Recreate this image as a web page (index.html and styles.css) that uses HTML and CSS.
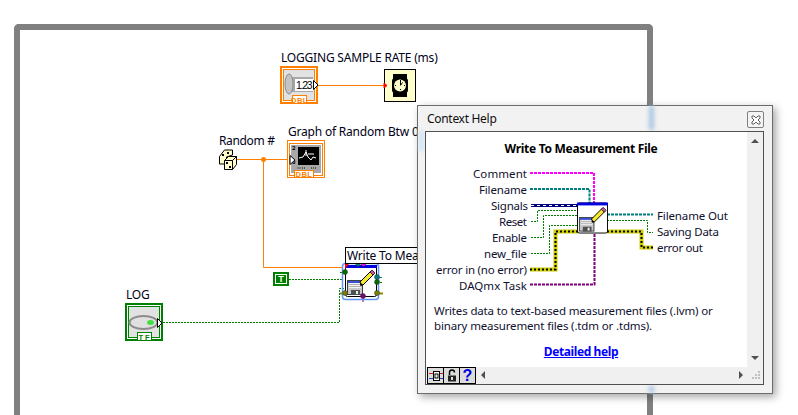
FILE: index.html
```html
<!DOCTYPE html>
<html lang="en">
<head>
    <meta charset="UTF-8">
    <title>Block Diagram</title>
    <link rel="stylesheet" href="styles.css">
</head>
<body>
    <!-- VI icon used on the diagram and in the help window -->
    <svg class="defs" width="0" height="0">
        <symbol id="vi-icon" viewBox="0 0 32 32">
            <rect x="0.5" y="0.5" width="31" height="31" rx="2" fill="#fff" stroke="#000"/>
            <rect x="0" y="0" width="32" height="3" fill="#0000e0"/>
            <rect x="2.5" y="15.5" width="15" height="14" fill="#c8c8c8" stroke="#404040"/>
            <rect x="3" y="16" width="14" height="2" fill="#3a50d8"/>
            <rect x="4" y="18" width="12" height="5" fill="#f4f4f4"/>
            <path d="M4 19.5h12M4 21.5h12" stroke="#b0b0b0"/>
            <rect x="6" y="25" width="9" height="5" fill="#505050"/>
            <rect x="11" y="26" width="2" height="3" fill="#eee"/>
            <path d="M16 20l-1-3 11-11 3 3-11 11z" fill="#f4e830" stroke="#000"/>
            <path d="M25 7l2-2 3 3-2 2z" fill="#d050a0" stroke="#000" stroke-width=".7"/>
            <path d="M15 21l1-3 2 2z" fill="#000"/>
        </symbol>
    </svg>

    <div class="diagram">
        <span class="label label-rate">LOGGING SAMPLE RATE (ms)</span>
        <span class="label label-random">Random #</span>
        <span class="label label-graph">Graph of Random Btw 0-1</span>
        <span class="label label-log">LOG</span>
        <span class="label label-write">Write To Measurement File</span>

        <svg class="nodes" width="798" height="415" viewBox="0 0 798 415">
            <!-- wires -->
            <path class="wire-dbl" d="M317 85.5H385M237 159.5H288M263.5 159V267.5H342"/>
            <circle cx="263.5" cy="159.5" r="2.5" fill="#ff8000"/>
            <path class="wire-bool" d="M289 279.5H342M163 322.5H339.5V288.5H344M340 272.5H344"/>

            <!-- LOGGING SAMPLE RATE control -->
            <rect x="281" y="67" width="36" height="36" fill="#fff" stroke="#ff8000" stroke-width="2"/>
            <rect x="283.5" y="69.5" width="31" height="31" fill="#e2e2e2" stroke="#ff8000"/>
            <rect x="292" y="77" width="21" height="15" fill="#a8a8a8"/>
            <ellipse cx="289" cy="84" rx="4" ry="10" fill="#c4c4c4" stroke="#8c8c8c"/>
            <rect x="295" y="79" width="18" height="12" fill="#fff"/>
            <text class="num-text" x="296" y="89" textLength="16.5">1.23</text>
            <path d="M313.5 80.5l4.500 4.500-4.500 4.500z" fill="#fff" stroke="#000"/>
            <rect x="292.500" y="95.500" width="14" height="8" fill="#fff" stroke="#ff8000"/>
            <text class="tag-text tag-orange" x="299.500" y="102.500">DBL</text>

            <!-- Wait node -->
            <rect x="384.500" y="69.500" width="31" height="32" fill="#ffffcc" stroke="#000"/>
            <rect x="393" y="74" width="14" height="23" fill="#000"/>
            <rect x="392" y="78" width="16" height="15" rx="3" fill="#000"/>
            <circle cx="400" cy="85.500" r="6" fill="#ffffcc"/>
            <path d="M400.500 80v5M400.500 85.500l2-3M395 85.500h1M404 85.500h1M400.500 89v1" stroke="#000" fill="none"/>
            <path d="M384 83l3 2.500-3 2.500z" fill="#ff0000" stroke="#ff0000"/>

            <!-- Random number dice -->
            <path d="M219.500 156.500l5-6.500h8v5l-6 2v7h-7z" fill="#ffffcc" stroke="#000"/>
            <path d="M224.500 160.500l4-4h8v8l-4 5h-8z" fill="#ffffcc" stroke="#000"/>
            <path d="M224.500 160.500h8v9M232.500 160.500l4-4" fill="none" stroke="#000"/>
            <rect x="226" y="162" width="2" height="2"/>
            <rect x="229" y="166" width="2" height="2"/>
            <rect x="222" y="154" width="2" height="2"/>
            <rect x="227" y="152" width="2" height="2"/>

            <!-- Graph indicator -->
            <rect x="287.500" y="140.500" width="37" height="37" fill="#fff" stroke="#ff8000"/>
            <rect x="289.500" y="143.500" width="33" height="32" fill="#fff" stroke="#ff8000"/>
            <rect x="291" y="145" width="30" height="28" fill="#a8a8a8"/>
            <rect x="298" y="147" width="21" height="18" fill="#000"/>
            <path d="M299 158l4-1 3-5 2 5 3 3 2-3 3 1M306 150v6M308 154h6" fill="none" stroke="#fff"/>
            <text class="tiny-text" x="292" y="150">2</text>
            <text class="tiny-text" x="292" y="164">0</text>
            <path d="M297.500 168h4M302 168h3M311 168h6" fill="none" stroke="#000" stroke-dasharray="1 1"/>
            <path d="M290 155.500l5 4.500-5 4.500z" fill="#fff" stroke="#000"/>
            <rect x="294.500" y="170.500" width="19" height="7" fill="#fff" stroke="#ff8000"/>
            <text class="tag-text tag-orange" x="304" y="177">DBL</text>

            <!-- LOG control -->
            <rect x="126" y="304" width="36" height="36" fill="#fff" stroke="#008000" stroke-width="2"/>
            <rect x="128.500" y="306.500" width="31" height="31" fill="#e2e2e2" stroke="#008000"/>
            <ellipse cx="143.500" cy="322.500" rx="14" ry="6.500" fill="#e0e0e0" stroke="#8c8c8c" stroke-width="2"/>
            <ellipse cx="150.500" cy="322.500" rx="3.500" ry="2.500" fill="#40e040"/>
            <path d="M157.500 318.500l4.500 4.500-4.500 4.500z" fill="#fff" stroke="#000"/>
            <rect x="137.500" y="332.500" width="14" height="8" fill="#fff" stroke="#008000"/>
            <text class="tag-text tag-green tag-wide" x="145" y="339.500">TF</text>

            <!-- True constant -->
            <rect x="273" y="272" width="16" height="14" fill="#008000"/>
            <rect x="275.500" y="274.500" width="11" height="9" fill="none" stroke="#fff"/>
            <text class="const-text" x="281" y="282">T</text>

            <!-- Write To Measurement File express VI -->
            <path class="stub-pink" d="M363.500 259V264"/>
            <path class="stub-err" d="M340 293.500H345M377 293.500H383"/>
            <path class="stub-teal" d="M377 277.500H382"/>
            <path class="stub-purple" d="M363 296V302"/>
            <path class="wire-bool" d="M377 282.500H382"/>
            <rect x="342.500" y="263.500" width="36" height="36" rx="3" fill="none" stroke="#5f96f5" stroke-width="1.500"/>
            <use href="#vi-icon" x="345" y="265" width="32" height="32"/>
            <path d="M345 264h4l-4 5z" fill="#ff0000"/>
            <circle class="term term-teal" cx="358" cy="264" r="2.200"/>
            <circle class="term term-pink" cx="363.500" cy="264" r="2.200"/>
            <circle class="term term-green" cx="345" cy="272" r="2.500"/>
            <circle class="term term-olive" cx="345" cy="293" r="2.500"/>
            <circle class="term term-teal" cx="377" cy="277" r="2.500"/>
            <circle class="term term-green" cx="377" cy="282" r="2.500"/>
            <circle class="term term-olive" cx="377" cy="293" r="2.500"/>
            <circle class="term term-purple" cx="363" cy="296" r="2.500"/>
        </svg>
    </div>

    <!-- Context Help window -->
    <div class="help-window">
        <div class="glass glass-top"></div>
        <div class="glass glass-bottom"></div>
        <div class="glass glass-left"></div>
        <div class="help-title">
            <span>Context Help</span>
            <button class="close-btn" type="button">
                <svg width="10" height="10" viewBox="0 0 10 10"><path d="M1 1h2l2 2 2-2h2v2l-2 2 2 2v2h-2l-2-2-2 2h-2v-2l2-2-2-2z" fill="#fff" stroke="#606060"/></svg>
            </button>
        </div>
        <div class="help-pane">
            <div class="help-main">
                <div class="help-text">
                    <h1 class="help-heading">Write To Measurement File</h1>
                    <svg class="pins" width="321" height="135" viewBox="426 160 321 135">
                        <text class="pin pin-in" x="527" y="178" textLength="54">Comment</text>
                        <text class="pin pin-in" x="527" y="194" textLength="48">Filename</text>
                        <text class="pin pin-in" x="528" y="210" textLength="37">Signals</text>
                        <text class="pin pin-in" x="527" y="226" textLength="28">Reset</text>
                        <text class="pin pin-in" x="527" y="242" textLength="35">Enable</text>
                        <text class="pin pin-in" x="527" y="258" textLength="43">new_file</text>
                        <text class="pin pin-in" x="527" y="274" textLength="91">error in (no error)</text>
                        <text class="pin pin-in" x="527" y="290" textLength="68">DAQmx Task</text>
                        <text class="pin" x="657" y="220" textLength="71">Filename Out</text>
                        <text class="pin" x="657" y="236" textLength="62">Saving Data</text>
                        <text class="pin" x="657" y="252" textLength="46">error out</text>

                        <path class="help-pink" d="M530 173H594V204"/>
                        <path class="help-teal" d="M530 189H589.500V204"/>
                        <path class="help-purple" d="M530 284.500H594.500V232"/>
                        <path class="help-signal-a" d="M531 205.500H578"/>
                        <path class="help-signal-b" d="M531 205.500H578"/>
                        <path class="wire-bool" d="M531 221.500H537.500V210.500H578M531 237.500H543.500V215.500H578M531 253.500H549.500V225.500H578"/>
                        <path class="help-err-a" d="M530 269.500H555.500V231.500H578"/>
                        <path class="help-err-b" d="M530 269.500H555.500V231.500H578"/>
                        <path class="help-teal" d="M607 214.500H653"/>
                        <path class="wire-bool" d="M607 220.500H647.500V232.500H653"/>
                        <path class="help-err-a" d="M607 231.500H641.500V247.500H653"/>
                        <path class="help-err-b" d="M607 231.500H641.500V247.500H653"/>
                        <use href="#vi-icon" x="577" y="202" width="31" height="32"/>
                    </svg>
                    <p class="help-desc">Writes data to text-based measurement files (.lvm) or<br>binary measurement files (.tdm or .tdms).</p>
                    <a class="help-link" href="#">Detailed help</a>
                </div>
                <div class="vscroll">
                    <span class="arrow arrow-up"></span>
                    <span class="arrow arrow-down"></span>
                </div>
            </div>
            <div class="help-bottom">
                <div class="tool-btns">
                    <button class="tool-btn" type="button">
                        <svg width="14" height="14" viewBox="0 0 14 14">
                            <path d="M0 4.500H5M9 4.500H14" fill="none" stroke="#d02020"/>
                            <path d="M0 9.500H5M9 9.500H14" fill="none" stroke="#2040d0"/>
                            <rect x="4.500" y="2.500" width="6" height="9" fill="#fff" stroke="#000"/>
                            <rect x="6" y="5" width="3" height="4" fill="none" stroke="#000"/>
                        </svg>
                    </button>
                    <button class="tool-btn" type="button">
                        <svg width="14" height="14" viewBox="0 0 14 14">
                            <path d="M4.500 6V3.500a2.500 2.500 0 0 1 5 0" fill="none" stroke="#000" stroke-width="1.500"/>
                            <rect x="3" y="6.500" width="8" height="6" fill="#222"/>
                            <rect x="6" y="8" width="2" height="3" fill="#ddd"/>
                        </svg>
                    </button>
                    <button class="tool-btn tool-help" type="button">?</button>
                </div>
                <div class="hscroll">
                    <span class="arrow arrow-left"></span>
                    <span class="arrow arrow-right"></span>
                </div>
                <div class="grip">
                    <svg width="16" height="16" viewBox="0 0 16 16">
                        <path d="M11 4h2v2h-2zM8 7h2v2h-2zM11 7h2v2h-2zM5 10h2v2h-2zM8 10h2v2h-2zM11 10h2v2h-2z" fill="#c0c0c0"/>
                    </svg>
                </div>
            </div>
        </div>
    </div>
</body>
</html>
```

FILE: styles.css
```css
/* page */
body {
    margin: 0;
    background-color: #fff;
    font-family: "Noto Sans", sans-serif;
    font-size: 12px;
    color: #000;
    width: 798px;
    height: 415px;
    overflow: hidden;
    position: relative;
}

.defs {
    position: absolute;
}

/* block diagram frame */
.diagram {
    margin: 0 0 0 14px;
    position: relative;
    left: 0;
    top: 24px;
    width: 627px;
    height: 385px;
    border: 6px solid #808080;
    border-bottom: none;
    border-top-left-radius: 5px;
    border-top-right-radius: 5px;
}

.nodes {
    position: absolute;
    left: -20px;
    top: -30px;
}

/* free labels on the diagram */
.label {
    position: absolute;
    line-height: 16px;
    white-space: nowrap;
    letter-spacing: -0.2px;
    color: #000018;
    z-index: 1;
}

.label-rate { left: 261px; top: 20px; }
.label-random { left: 199px; top: 103px; letter-spacing: -0.35px; }
.label-graph { left: 268px; top: 94px; }
.label-log { left: 106px; top: 257px; }

.label-write {
    left: 325px;
    top: 217px;
    width: 110px;
    height: 15px;
    padding-left: 1px;
    background-color: #fff;
    border: 1px solid #000;
    border-right: none;
}

/* wires */
.wire-dbl { stroke: #ff8000; fill: none; }
.wire-bool { stroke: #008000; stroke-dasharray: 2 1; fill: none; }
.stub-pink { stroke: #ff00ff; stroke-width: 2; fill: none; }
.stub-err { stroke: #8c8c00; stroke-width: 2; fill: none; }
.stub-teal { stroke: #007f7f; fill: none; }
.stub-purple { stroke: #800080; fill: none; }

.help-pink { stroke: #ff00ff; stroke-width: 2; stroke-dasharray: 3 1; fill: none; }
.help-teal { stroke: #007f7f; stroke-width: 2; stroke-dasharray: 3 1; fill: none; }
.help-purple { stroke: #800080; stroke-width: 2; stroke-dasharray: 3 1; fill: none; }
.help-signal-a { stroke: #000080; stroke-width: 3; fill: none; }
.help-signal-b { stroke: #fff; stroke-dasharray: 3 3; fill: none; }
.help-err-a { stroke: #d0d000; stroke-width: 4; fill: none; }
.help-err-b { stroke: #000; stroke-width: 2; stroke-dasharray: 2 2; fill: none; }

/* terminals on the express VI */
.term { stroke: #303030; stroke-width: 0.5; }
.term-teal { fill: #007f7f; }
.term-pink { fill: #ff00ff; }
.term-green { fill: #007000; }
.term-olive { fill: #808000; }
.term-purple { fill: #800080; }

/* small texts inside the nodes */
.num-text { font-family: "Liberation Sans", sans-serif; font-size: 10.5px; fill: #000; }
.tag-text { font-family: "Liberation Sans", sans-serif; font-size: 7.5px; font-weight: 700; text-anchor: middle; letter-spacing: 0.5px; }
.tag-wide { letter-spacing: 2px; }
.tag-orange { fill: #ff8000; }
.tag-green { fill: #008000; }
.tiny-text { font-size: 6px; font-weight: 700; fill: #000; }
.const-text { font-family: "Liberation Sans", sans-serif; font-size: 9px; font-weight: 700; fill: #fff; text-anchor: middle; }

/* context help window */
.help-window {
    position: absolute;
    left: 417px;
    top: 105px;
    padding: 0 8px 8px 7px;
    width: 339px;
    height: 279px;
    background-color: #f2f2f2;
    border: 1px solid #6c6c6c;
    box-shadow: 3px 3px 8px rgba(0, 0, 0, 0.35);
    z-index: 2;
    display: flex;
    flex-direction: column;
}

/* frame seen blurred through the aero glass border */
.glass {
    position: absolute;
    background-color: #a8c4e0;
    filter: blur(2px);
}

.glass-top { left: 231px; top: 0; width: 5px; height: 24px; }
.glass-bottom { left: 231px; bottom: 0; width: 5px; height: 7px; }
.glass-left { left: 1px; top: 25px; width: 5px; height: 20px; background-color: #cfe2f4; }

.help-title {
    height: 25px;
    flex: none;
    display: flex;
    justify-content: space-between;
    align-items: center;
    position: relative;
    padding-left: 2px;
    letter-spacing: -0.3px;
    color: #101010;
}

.close-btn {
    width: 17px;
    height: 17px;
    margin-top: 2px;
    padding: 0;
    border: 1px solid #808080;
    border-radius: 2px;
    background-color: #f4f4f4;
    display: flex;
    align-items: center;
    justify-content: center;
}

.help-pane {
    flex: 1;
    position: relative;
    border: 1px solid #505050;
    background-color: #fff;
    display: flex;
    flex-direction: column;
    min-height: 0;
}

.help-main {
    flex: 1;
    display: flex;
    min-height: 0;
}

.help-text {
    width: 321px;
    flex: none;
}

.help-heading {
    margin: 9px 11px 4px 0;
    height: 15px;
    line-height: 15px;
    font-size: 12px;
    font-weight: 700;
    letter-spacing: -0.3px;
    text-align: center;
    color: #000;
}

.pins {
    display: block;
}

.pin {
    font-size: 11.5px;
    fill: #101030;
}

.pin-in {
    text-anchor: end;
}

.help-desc {
    margin: 8px 0 0 8px;
    font-size: 11.5px;
    line-height: 15px;
    letter-spacing: -0.15px;
    color: #101030;
}

.help-link {
    display: block;
    margin: 10px 11px 0 0;
    text-align: center;
    font-weight: 700;
    letter-spacing: -0.4px;
    color: #0000ff;
}

/* scrollbars */
.vscroll {
    flex: 1;
    background-color: #f0f0f0;
    position: relative;
}

.help-bottom {
    height: 17px;
    flex: none;
    display: flex;
    background-color: #f0f0f0;
}

.tool-btns {
    display: flex;
    margin-left: 1px;
}

.tool-btn {
    width: 17px;
    height: 17px;
    margin-right: -1px;
    padding: 0;
    border: 1px solid #000;
    background-color: #dcdcdc;
    display: flex;
    align-items: center;
    justify-content: center;
}

.tool-help {
    font-family: "Liberation Sans", sans-serif;
    font-size: 16px;
    font-weight: 700;
    color: #0000e0;
}

.hscroll {
    flex: 1;
    position: relative;
    margin-left: 1px;
}

.grip {
    width: 16px;
    flex: none;
}

.arrow {
    position: absolute;
    width: 0;
    height: 0;
    border-style: solid;
    border-color: transparent;
}

.arrow-up {
    left: 4px;
    top: 7px;
    border-width: 0 4px 4px;
    border-bottom-color: #505050;
}

.arrow-down {
    left: 4px;
    bottom: 7px;
    border-width: 4px 4px 0;
    border-top-color: #505050;
}

.arrow-left {
    left: 5px;
    top: 4px;
    border-width: 4px 4px 4px 0;
    border-right-color: #505050;
}

.arrow-right {
    right: 4px;
    top: 4px;
    border-width: 4px 0 4px 4px;
    border-left-color: #505050;
}
```
